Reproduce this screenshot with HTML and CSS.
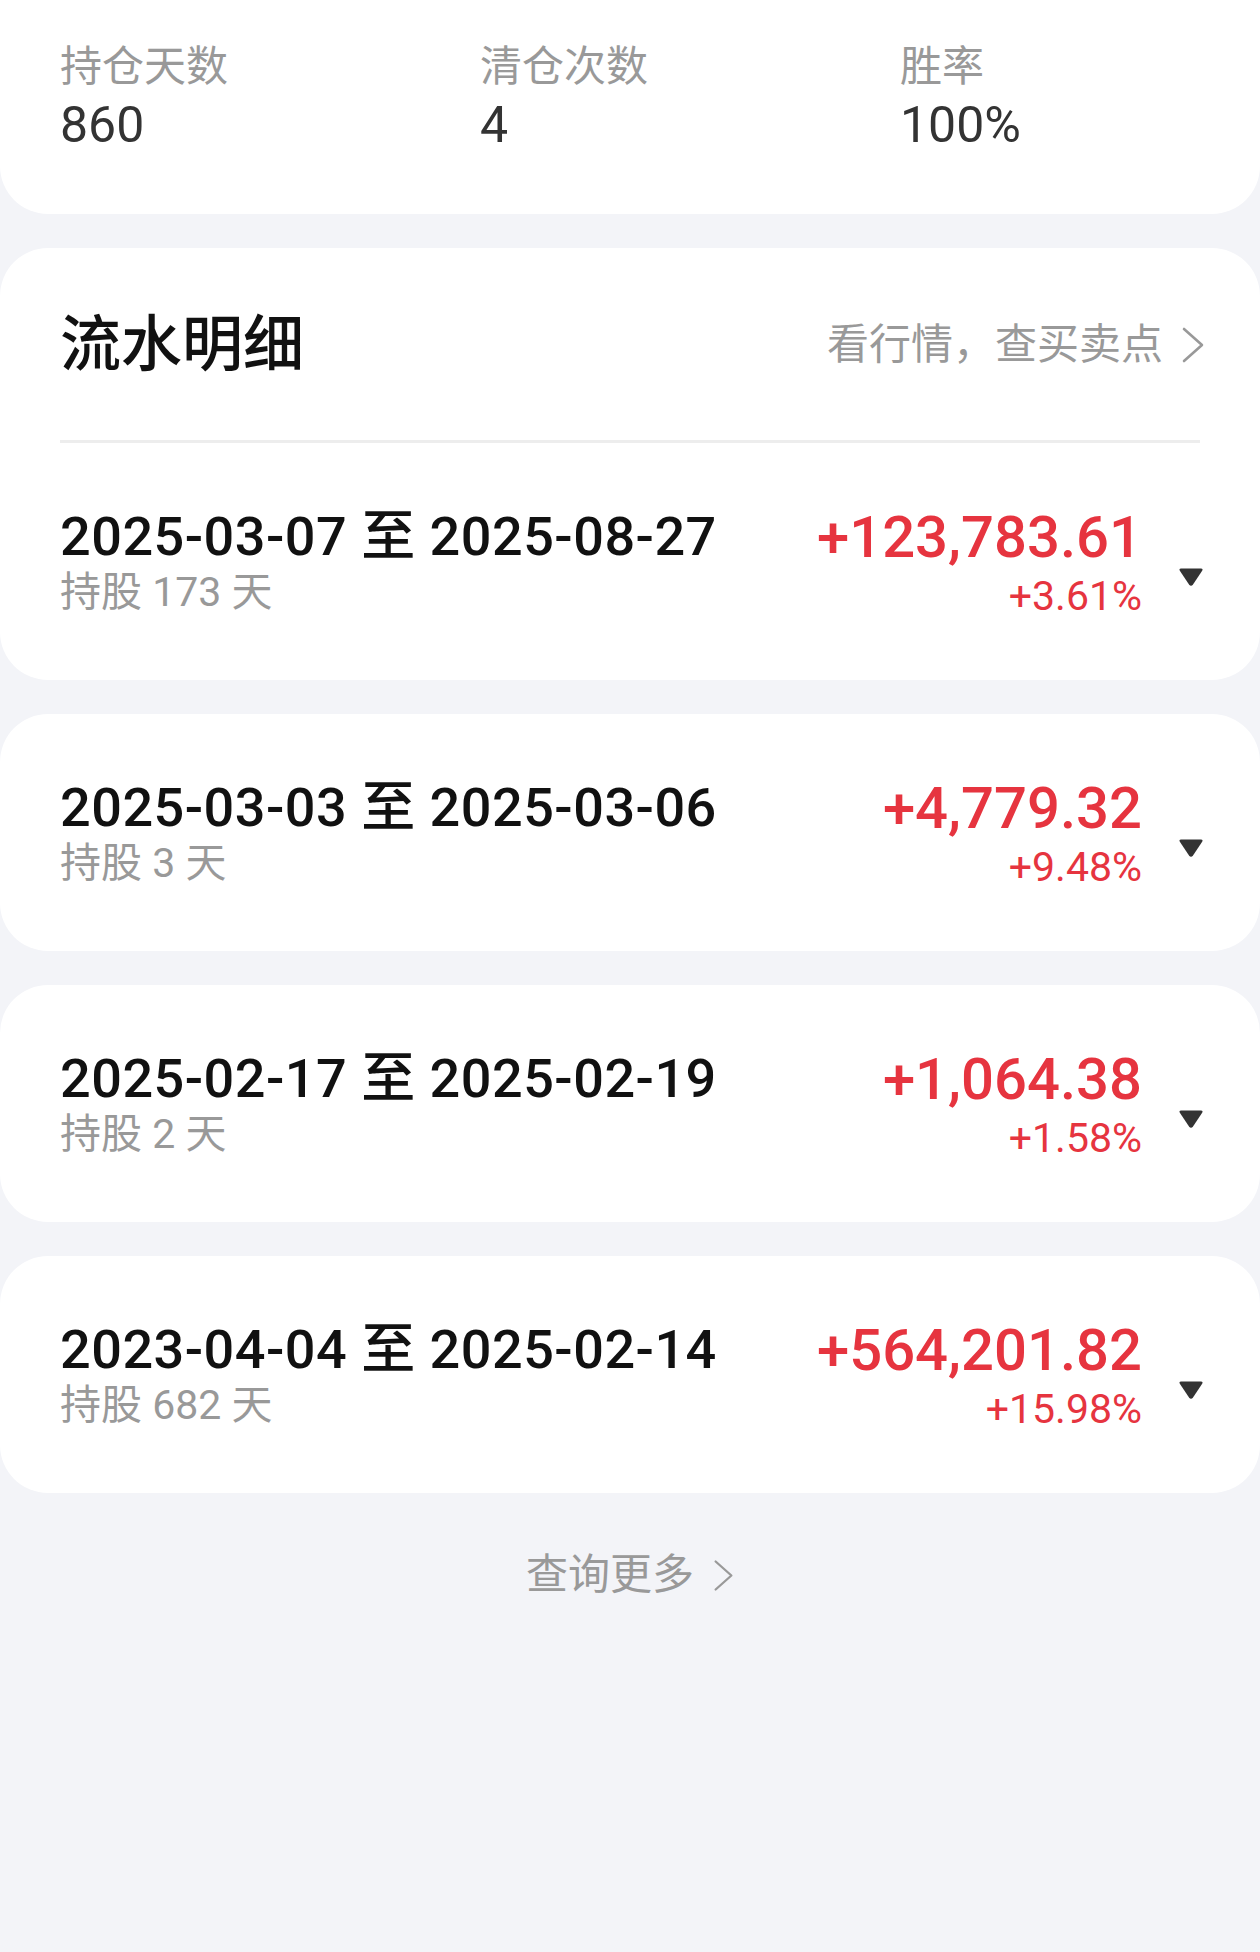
FILE: index.html
```html
<!DOCTYPE html>
<html lang="zh-CN">
<head>
	<meta charset="UTF-8">
	<title>流水明细</title>
	<link rel="stylesheet" href="styles.css">
</head>
<body>
	<div class="page">
		<!-- 统计 -->
		<div class="card stats">
			<div class="stat">
				<div class="stat-label">持仓天数</div>
				<div class="stat-value">860</div>
			</div>
			<div class="stat">
				<div class="stat-label">清仓次数</div>
				<div class="stat-value">4</div>
			</div>
			<div class="stat">
				<div class="stat-label">胜率</div>
				<div class="stat-value">100%</div>
			</div>
		</div>

		<!-- 流水明细 -->
		<div class="card">
			<div class="list-head">
				<h2 class="list-title">流水明细</h2>
				<a class="link">看行情，查买卖点<svg class="chevron" width="24" height="36" viewBox="0 0 24 36"><polyline points="3,2 21,18 3,34"/></svg></a>
			</div>
			<div class="row">
				<div class="row-left">
					<div class="row-date">2025-03-07 至 2025-08-27</div>
					<div class="row-days">持股 173 天</div>
				</div>
				<div class="row-right">
					<div class="row-amount">+123,783.61</div>
					<div class="row-rate">+3.61%</div>
				</div>
				<svg class="row-arrow" width="26" height="20" viewBox="0 0 26 20"><path d="M3 1.5 H23 Q25.5 1.5 24 4 L15 17.5 Q13 20 11 17.5 L2 4 Q0.5 1.5 3 1.5 Z"/></svg>
			</div>
		</div>

		<div class="card">
			<div class="row">
				<div class="row-left">
					<div class="row-date">2025-03-03 至 2025-03-06</div>
					<div class="row-days">持股 3 天</div>
				</div>
				<div class="row-right">
					<div class="row-amount">+4,779.32</div>
					<div class="row-rate">+9.48%</div>
				</div>
				<svg class="row-arrow" width="26" height="20" viewBox="0 0 26 20"><path d="M3 1.5 H23 Q25.5 1.5 24 4 L15 17.5 Q13 20 11 17.5 L2 4 Q0.5 1.5 3 1.5 Z"/></svg>
			</div>
		</div>

		<div class="card">
			<div class="row">
				<div class="row-left">
					<div class="row-date">2025-02-17 至 2025-02-19</div>
					<div class="row-days">持股 2 天</div>
				</div>
				<div class="row-right">
					<div class="row-amount">+1,064.38</div>
					<div class="row-rate">+1.58%</div>
				</div>
				<svg class="row-arrow" width="26" height="20" viewBox="0 0 26 20"><path d="M3 1.5 H23 Q25.5 1.5 24 4 L15 17.5 Q13 20 11 17.5 L2 4 Q0.5 1.5 3 1.5 Z"/></svg>
			</div>
		</div>

		<div class="card">
			<div class="row">
				<div class="row-left">
					<div class="row-date">2023-04-04 至 2025-02-14</div>
					<div class="row-days">持股 682 天</div>
				</div>
				<div class="row-right">
					<div class="row-amount">+564,201.82</div>
					<div class="row-rate">+15.98%</div>
				</div>
				<svg class="row-arrow" width="26" height="20" viewBox="0 0 26 20"><path d="M3 1.5 H23 Q25.5 1.5 24 4 L15 17.5 Q13 20 11 17.5 L2 4 Q0.5 1.5 3 1.5 Z"/></svg>
			</div>
		</div>

		<div class="more">
			<a class="link">查询更多<svg class="chevron small" width="21" height="33" viewBox="0 0 24 36"><polyline points="3,2 21,18 3,34"/></svg></a>
		</div>
	</div>
</body>
</html>
```

FILE: styles.css
```css
*{
	margin: 0;
	padding: 0;
	box-sizing: border-box;
}
body{
	background-color: #f3f4f8;
	font-family: Roboto, "Noto Sans CJK SC", sans-serif;
	color: #111;
}
.page{
	padding-bottom: 300px;
}
.card{
	background-color: #fff;
	border-radius: 48px;
	margin-bottom: 34px;
}
/* 统计 */
.stats{
	display: grid;
	grid-template-columns: repeat(3, 300px);
	column-gap: 120px;
	padding: 39px 60px 59px;
	border-radius: 0 0 48px 48px;
}
.stat-label{
	font-size: 42px;
	line-height: 56px;
	color: #999;
}
.stat-value{
	font-size: 50px;
	line-height: 60px;
	color: #333;
}
/* 流水明细 */
.list-head{
	display: flex;
	align-items: center;
	justify-content: space-between;
	height: 195px;
	margin: 0 60px;
	padding: 4px 0 3px;
	border-bottom: 3px solid #ededed;
}
.list-title{
	font-size: 61px;
	line-height: 80px;
	font-weight: 500;
	color: #111;
}
.link{
	display: flex;
	align-items: center;
	font-size: 42px;
	line-height: 56px;
	color: #999;
	cursor: pointer;
}
.list-head .link{
	margin-right: -5px;
}
.chevron{
	margin-left: 18px;
	fill: none;
	stroke: #999;
	stroke-width: 2.6;
	stroke-linecap: round;
	stroke-linejoin: round;
}
.chevron.small{
	margin-left: 19px;
}
.row{
	display: flex;
	align-items: flex-start;
	height: 237px;
	padding: 60px 56px 0 60px;
}
.row-left{
	flex: 1;
	margin-top: 3px;
}
.row-date{
	font-size: 54px;
	line-height: 62px;
	font-weight: 500;
	letter-spacing: 0.5px;
	color: #111;
}
.row-days{
	font-size: 41px;
	line-height: 48px;
	color: #999;
}
.row-right{
	margin-top: 2px;
	text-align: right;
	color: #e6343f;
}
.row-amount{
	font-size: 58px;
	line-height: 64px;
	font-weight: 500;
}
.row-rate{
	font-size: 41px;
	line-height: 54px;
}
.row-arrow{
	margin: 64px 0 0 36px;
	fill: #333;
}
.more{
	display: flex;
	justify-content: center;
	margin-top: 54px;
}
```
